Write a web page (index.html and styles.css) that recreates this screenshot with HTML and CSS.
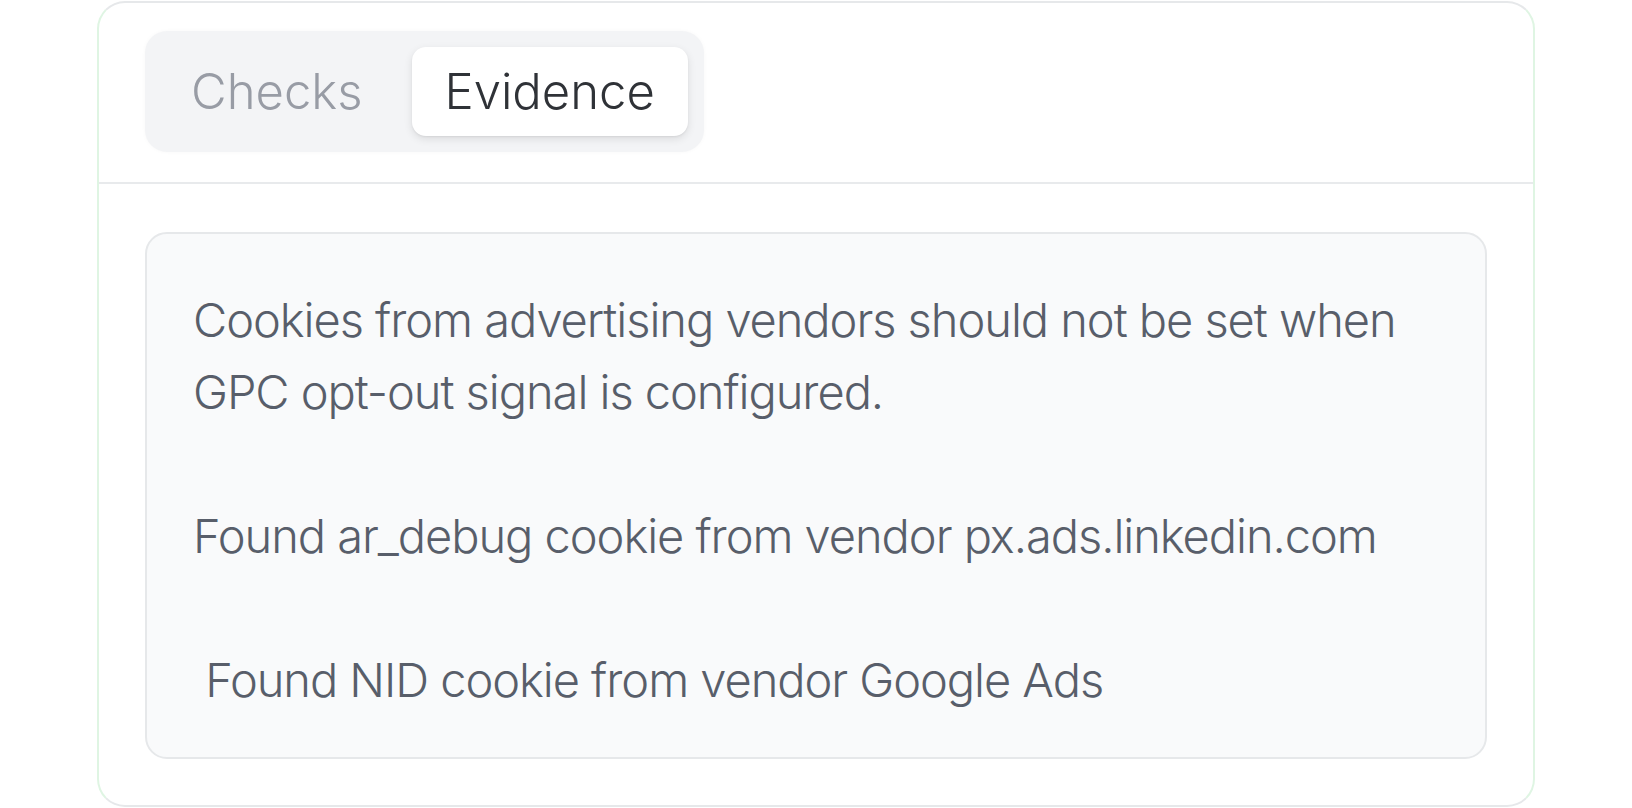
FILE: index.html
```html
<!DOCTYPE html>
<html>
<head>
<meta charset="utf-8">
<link rel="stylesheet" href="styles.css">
</head>
<body>
<div class="card">
  <div class="card-header">
    <div class="tabs">
      <div class="tab">Checks</div>
      <div class="tab active">Evidence</div>
    </div>
  </div>
  <div class="card-body">
    <div class="evidence">Cookies from advertising vendors should not be set when GPC opt-out signal is configured.

Found ar_debug cookie from vendor px.ads.linkedin.com

 Found NID cookie from vendor Google Ads</div>
  </div>
</div>
</body>
</html>
```

FILE: styles.css
```css
* { box-sizing: border-box; }
html, body { margin: 0; padding: 0; background: #fff; }
body {
  font-family: Inter, "Noto Sans", sans-serif;
  font-weight: 300;
  padding: 1px 97px 1px 97px;
}
.card {
  width: 1438px;
  height: 806px;
  border: 2px solid;
  border-color: #e6e8ea #dff5e3 #e6e8ea #dff5e3;
  border-radius: 28px;
  background: #fff;
  display: flex;
  flex-direction: column;
}
.card-header {
  padding: 28px 46px 30px;
  border-bottom: 2px solid #e8eaec;
  display: flex;
}
.tabs {
  display: flex;
  gap: 16px;
  padding: 16px 16px 16px 14px;
  background: #f3f4f6;
  border-radius: 22px;
  box-shadow: 0 0 4px rgba(0,0,0,0.03);
}
.tab {
  height: 89px;
  padding: 0 33px;
  display: flex;
  align-items: center;
  font-size: 49px;
  color: #989ca5;
  border-radius: 14px;
}
.tab:first-child {
  padding-left: 32px;
}
.tab.active {
  background: #fff;
  color: #2f3237;
  box-shadow: 0 3px 8px rgba(0,0,0,0.10), 0 1px 2px rgba(0,0,0,0.06);
}
.card-body {
  padding: 48px 46px 46px;
  flex: 1;
  display: flex;
}
.evidence {
  flex: 1;
  background: #f9fafb;
  border: 2px solid #e6e8ea;
  border-radius: 22px;
  padding: 50px 46px 40px;
  white-space: pre-wrap;
  font-size: 47px;
  line-height: 72px;
  letter-spacing: -1.05px;
  color: #585e6a;
}
```
